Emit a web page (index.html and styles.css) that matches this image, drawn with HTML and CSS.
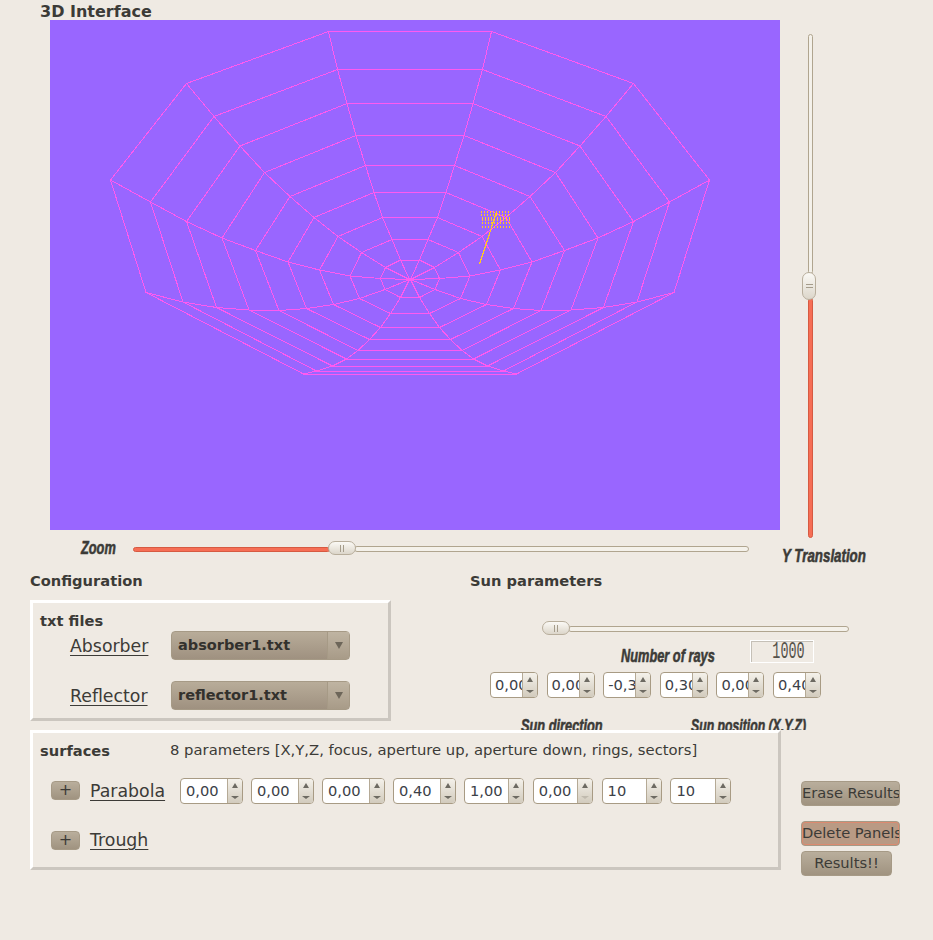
FILE: index.html
```html
<!DOCTYPE html>
<html lang="en">
<head>
<meta charset="utf-8">
<title>3D Interface</title>
<link rel="stylesheet" href="styles.css">
</head>
<body>
<h1 class="heading title">3D Interface</h1>
<div class="viewer">
  <svg class="canvas" viewBox="50 20 730 510" width="730" height="510">
    <g id="half" class="mesh">
      <polyline points="409.5,279.5 400.5,260 392,239.5 382.5,217.5 374,192.5 365.5,165.5 356,135.5 347,103.5 337.5,69.5 328.5,31.5"/>
      <polyline points="409.5,279.5 385.5,267.5 361.5,252.5 338,236.5 314,217.5 290,196.5 264.5,172.5 240,146 214,116.5 186.5,83.5"/>
      <polyline points="409.5,279.5 380.5,278.5 350,276 319.5,270 288,262 255.5,250.5 222,238 186.5,221.5 150.5,202 110.5,180"/>
      <polyline points="409.5,279.5 385,289.5 359.5,298.5 333.5,304.5 306.5,308.5 279,310.5 249,310 216.5,307.5 183,302 146,292.5"/>
      <polyline points="409.5,279.5 400.5,297.5 390.5,313.5 380.5,327.5 369.5,339.5 358,350.5 346.5,359 332.5,366 316.5,371 303.5,374"/>
      <polyline points="410,31.5 328.5,31.5 186.5,83.5 110.5,180 146,292.5 303.5,374 410,374"/>
      <polyline points="410,69.5 337.5,69.5 214,116.5 150.5,202 183,302 316.5,371 410,371"/>
      <polyline points="410,103.5 347,103.5 240,146 186.5,221.5 216.5,307.5 332.5,366 410,366"/>
      <polyline points="410,135.5 356,135.5 264.5,172.5 222,238 249,310 346.5,359 410,359"/>
      <polyline points="410,165.5 365.5,165.5 290,196.5 255.5,250.5 279,310.5 358,350.5 410,350.5"/>
      <polyline points="410,192.5 374,192.5 314,217.5 288,262 306.5,308.5 369.5,339.5 410,339.5"/>
      <polyline points="410,217.5 382.5,217.5 338,236.5 319.5,270 333.5,304.5 380.5,327.5 410,327.5"/>
      <polyline points="410,239.5 392,239.5 361.5,252.5 350,276 359.5,298.5 390.5,313.5 410,313.5"/>
      <polyline points="410,260 400.5,260 385.5,267.5 380.5,278.5 385,289.5 400.5,297.5 410,297.5"/>
    </g>
    <use href="#half" transform="matrix(-1 0 0 1 820 0)"/>
    <g class="rays">
      <line x1="481" y1="212" x2="509" y2="212"/>
      <line x1="481" y1="215" x2="509" y2="215"/>
      <line x1="482" y1="218" x2="510" y2="218"/>
      <line x1="482" y1="220" x2="510" y2="220"/>
      <line x1="482" y1="223" x2="510" y2="223"/>
      <line x1="482" y1="227" x2="510" y2="227"/>
    </g>
    <line class="ray-line" x1="496.5" y1="212" x2="479.5" y2="264.5"/>
  </svg>
  <div class="vslider">
    <div class="vtrack vrest"></div>
    <div class="thumb thumb-v"><i></i><i></i></div>
    <div class="vtrack vfill"></div>
  </div>
  <div class="zoom-row">
    <span class="impact zoom-label">Zoom</span>
    <div class="hslider zoom-slider">
      <div class="fill" style="width:197px"></div>
      <div class="thumb"><i></i><i></i></div>
      <div class="rest"></div>
    </div>
  </div>
  <span class="impact y-label">Y Translation</span>
</div>

<div class="panels">
  <section class="config">
    <h2 class="heading">Configuration</h2>
    <div class="frame files">
      <h3 class="heading">txt files</h3>
      <div class="file-row">
        <a class="link">Absorber</a>
        <div class="combo"><span>absorber1.txt</span><b></b></div>
      </div>
      <div class="file-row">
        <a class="link">Reflector</a>
        <div class="combo"><span>reflector1.txt</span><b></b></div>
      </div>
    </div>
  </section>
  <section class="sun">
    <h2 class="heading">Sun parameters</h2>
    <div class="hslider sun-slider">
      <div class="thumb"><i></i><i></i></div>
      <div class="rest"></div>
    </div>
    <div class="rays-row">
      <span class="impact rays-label">Number of rays</span>
      <div class="lcd"><span>1000</span></div>
    </div>
    <div class="spins sun-spins">
      <div class="spin"><span>0,00</span><div class="arrows"><i class="up"></i><i class="down"></i></div></div>
      <div class="spin"><span>0,00</span><div class="arrows"><i class="up"></i><i class="down"></i></div></div>
      <div class="spin"><span>-0,30</span><div class="arrows"><i class="up"></i><i class="down"></i></div></div>
      <div class="spin"><span>0,30</span><div class="arrows"><i class="up"></i><i class="down"></i></div></div>
      <div class="spin"><span>0,00</span><div class="arrows"><i class="up"></i><i class="down"></i></div></div>
      <div class="spin"><span>0,40</span><div class="arrows"><i class="up"></i><i class="down"></i></div></div>
    </div>
    <div class="sun-labels">
      <span class="impact dir-label">Sun direction</span>
      <span class="impact pos-label">Sun position (X,Y,Z)</span>
    </div>
  </section>
</div>

<div class="lower">
  <div class="frame surfaces">
    <div class="surfaces-head">
      <h3 class="heading">surfaces</h3>
      <p class="hint">8 parameters [X,Y,Z, focus, aperture up, aperture down, rings, sectors]</p>
    </div>
    <div class="surface-row">
      <button class="btn plus">+</button>
      <a class="link">Parabola</a>
      <div class="spins surf-spins">
        <div class="spin wide"><span>0,00</span><div class="arrows"><i class="up"></i><i class="down"></i></div></div>
        <div class="spin wide"><span>0,00</span><div class="arrows"><i class="up"></i><i class="down"></i></div></div>
        <div class="spin wide"><span>0,00</span><div class="arrows"><i class="up"></i><i class="down"></i></div></div>
        <div class="spin wide"><span>0,40</span><div class="arrows"><i class="up"></i><i class="down"></i></div></div>
        <div class="spin mid"><span>1,00</span><div class="arrows"><i class="up"></i><i class="down"></i></div></div>
        <div class="spin mid"><span>0,00</span><div class="arrows"><i class="up"></i><i class="down off"></i></div></div>
        <div class="spin mid"><span>10</span><div class="arrows"><i class="up"></i><i class="down"></i></div></div>
        <div class="spin mid"><span>10</span><div class="arrows"><i class="up"></i><i class="down"></i></div></div>
      </div>
    </div>
    <div class="surface-row trough">
      <button class="btn plus">+</button>
      <a class="link">Trough</a>
    </div>
  </div>
  <div class="actions">
    <button class="btn action">Erase Results</button>
    <button class="btn action danger">Delete Panels</button>
    <button class="btn action short">Results!!</button>
  </div>
</div>
</body>
</html>
```
FILE: styles.css
```css
* { box-sizing: border-box; }
html, body { margin: 0; padding: 0; }
body {
  width: 933px;
  height: 940px;
  overflow: hidden;
  background: #efeae3;
  color: #3c3b37;
  font-family: "DejaVu Sans", sans-serif;
  font-size: 14.67px;
}
.heading {
  margin: 0;
  font-size: 14.67px;
  font-weight: bold;
  line-height: 18px;
  color: #3c3b37;
}
.title { height: 20px; padding: 3px 0 0 40px; font-size: 16px; }

/* viewer */
.viewer {
  display: grid;
  grid-template-columns: 730px 153px;
  grid-template-rows: 510px 36px;
  margin-left: 50px;
}
.canvas { display: block; background: #9966ff; grid-column: 1; grid-row: 1; }
.mesh polyline { fill: none; stroke: #ff5af0; stroke-width: 1; shape-rendering: crispEdges; }
.rays line { stroke: #ffc822; stroke-width: 2; stroke-dasharray: 1 2; }
.ray-line { stroke: #ffc822; stroke-width: 1.2; shape-rendering: crispEdges; }

.vslider {
  grid-column: 2;
  grid-row: 1 / span 2;
  display: flex;
  flex-direction: column;
  align-items: flex-start;
  height: 504px;
  margin: 14px 0 0 22px;
}
.vtrack { width: 5px; margin-left: 6px; border-radius: 3px; }
.vrest { height: 240px; background: #f4f1ea; border: 1px solid #b0a58f; margin-bottom: -2px; }
.vfill { flex: 1; background: #f66e55; border: 1px solid #d65a42; margin-top: -2px; }

.thumb {
  flex: none;
  display: flex;
  align-items: center;
  justify-content: center;
  gap: 2px;
  width: 28px;
  height: 14px;
  border: 1px solid #b8ae9c;
  border-radius: 7px;
  background: linear-gradient(#fbf9f5, #dcd6ca);
  position: relative;
  z-index: 1;
}
.thumb i { display: block; width: 1px; height: 7px; background: #a59c8b; }
.thumb-v { flex-direction: column; width: 14px; height: 28px; }
.thumb-v i { width: 7px; height: 1px; }

.zoom-row {
  grid-column: 1;
  grid-row: 2;
  display: flex;
  align-items: flex-start;
  padding-top: 10px;
}
.impact {
  display: inline-block;
  font-family: "Liberation Sans", sans-serif;
  font-weight: bold;
  font-style: italic;
  font-size: 18px;
  line-height: 16px;
  color: #3c3b37;
  -webkit-text-stroke: 0.6px #3c3b37;
  white-space: nowrap;
  transform: scaleX(0.71);
  transform-origin: left center;
}
.zoom-label { margin-left: 31px; width: 52px; flex: none; }
.hslider { display: flex; align-items: center; height: 14px; }
.zoom-slider { width: 616px; margin-top: 1px; }
.fill { height: 5px; flex: none; margin: 2px -2px 0 0; background: #f66e55; border: 1px solid #d65a42; border-radius: 3px; }
.rest { flex: 1; height: 6px; margin: 2px 0 0 -2px; background: #f4f1ea; border: 1px solid #b0a58f; border-radius: 3px; }
.y-label { grid-column: 2; grid-row: 2; align-self: end; justify-self: start; margin: 0 0 2px 2px; transform: scaleX(0.74); }

/* panels */
.panels { display: flex; height: 164px; overflow: hidden; padding-left: 30px; }
.config { width: 440px; flex: none; }
.config .heading { height: 34px; padding-top: 6px; }
.frame {
  border-style: solid;
  border-width: 3px;
  border-color: #ffffff #cbc6bf #cbc6bf #ffffff;
  background: #efeae3;
}
.files { width: 361px; height: 121px; padding: 9px 7px 0; }
.files .heading { height: 19px; padding: 0; line-height: 18px; }
.file-row { display: flex; align-items: center; height: 29px; margin-bottom: 21px; padding-left: 30px; }
.link { font-size: 17.33px; line-height: 22px; text-decoration: underline; text-underline-offset: 3px; color: #3c3b37; }
.file-row .link { width: 101px; flex: none; }
.combo {
  display: flex;
  align-items: stretch;
  width: 179px;
  height: 29px;
  border: 1px solid #a69a86;
  border-radius: 4px;
  background: linear-gradient(#b8ac99, #9f9180);
  font-size: 14.5px;
  font-weight: bold;
  color: #33312d;
}
.combo span { flex: 1; padding-left: 6px; line-height: 27px; }
.combo b {
  position: relative;
  flex: none;
  width: 22px;
  border-left: 1px solid #a69a86;
  background: linear-gradient(#bfb4a2, #a89b88);
}
.combo b::after {
  content: "";
  position: absolute;
  left: 7px;
  top: 10px;
  border-style: solid;
  border-width: 7px 4px 0;
  border-color: #6d6659 transparent transparent;
}

/* sun */
.sun { flex: 1; }
.sun .heading { height: 55px; padding-top: 6px; }
.sun-slider { width: 307px; margin-left: 72px; }
.rays-row { display: flex; height: 37px; margin-top: 5px; }
.rays-label { margin: 8px 0 0 151px; width: 129px; flex: none; }
.lcd {
  width: 64px;
  height: 23px;
  border: 1px solid #ffffff;
  box-shadow: inset 1px 1px 0 #c5c0b7;
  overflow: hidden;
  display: flex;
  justify-content: flex-end;
  align-items: center;
}
.lcd span {
  font-family: "Liberation Mono", monospace;
  font-size: 24px;
  line-height: 21px;
  color: #55524b;
  transform: scaleX(0.56);
  transform-origin: right center;
  margin-right: 8px;
}
.spins { display: flex; }
.sun-spins { gap: 8.6px; margin: -5px 0 0 20px; }
.spin {
  display: flex;
  width: 48px;
  height: 26px;
  border: 1px solid #a89b84;
  border-radius: 4px;
  background: #ffffff;
  overflow: hidden;
  flex: none;
}
.spin span { flex: 1; min-width: 0; padding-left: 4px; overflow: hidden; white-space: nowrap; line-height: 24px; color: #3c4148; }
.arrows {
  flex: none;
  width: 15px;
  display: flex;
  flex-direction: column;
  align-items: center;
  justify-content: space-between;
  padding: 4px 0 4px;
  border-left: 1px solid #b5aa96;
  background: linear-gradient(#f4f1ea, #d2cbbd);
}
.up { border-style: solid; border-width: 0 3px 5px; border-color: transparent transparent #6d6a62; }
.down { border-style: solid; border-width: 3px 4px 0; border-color: #6d6a62 transparent transparent; }
.down.off { border-color: #c0baae transparent transparent; }
.sun-labels { display: flex; margin: 20px 0 0 51px; }
.dir-label { width: 170px; flex: none; }
.pos-label { transform: scaleX(0.68); }

/* lower */
.lower { display: flex; padding-left: 30px; }
.surfaces { width: 751px; height: 140px; padding: 9px 7px 0; }
.surfaces-head { display: flex; height: 38px; }
.surfaces-head .heading { width: 130px; }
.hint { margin: -1px 0 0; line-height: 18px; font-size: 14.8px; }
.surface-row { display: flex; align-items: center; height: 21px; padding-left: 11px; }
.trough { margin-top: 29px; }
.trough .link { margin-top: -1px; }
.btn {
  font-family: "DejaVu Sans", sans-serif;
  font-size: 14.67px;
  color: #3c3b37;
  border: 1px solid #a69a86;
  border-radius: 4px;
  background: linear-gradient(#b9ae9c, #a09380);
  padding: 0 0 2px;
  white-space: nowrap;
  flex: none;
}
.plus { width: 29px; height: 19px; line-height: 15px; font-size: 16px; margin-right: 10px; }
.surface-row .link { width: 90px; flex: none; }
.surf-spins { gap: 8.5px; }
.wide { width: 62.5px; }
.mid { width: 60.3px; }
.wide span, .mid span { padding-left: 5px; }
.actions { display: flex; flex-direction: column; align-items: flex-start; margin-left: 20px; padding-top: 51px; }
.action { width: 99px; height: 25px; overflow: hidden; }
.danger { margin-top: 15px; background: #b99a84; box-shadow: inset 0 0 0 1px #dd8a70; }
.short { width: 91px; margin-top: 5px; }
```
